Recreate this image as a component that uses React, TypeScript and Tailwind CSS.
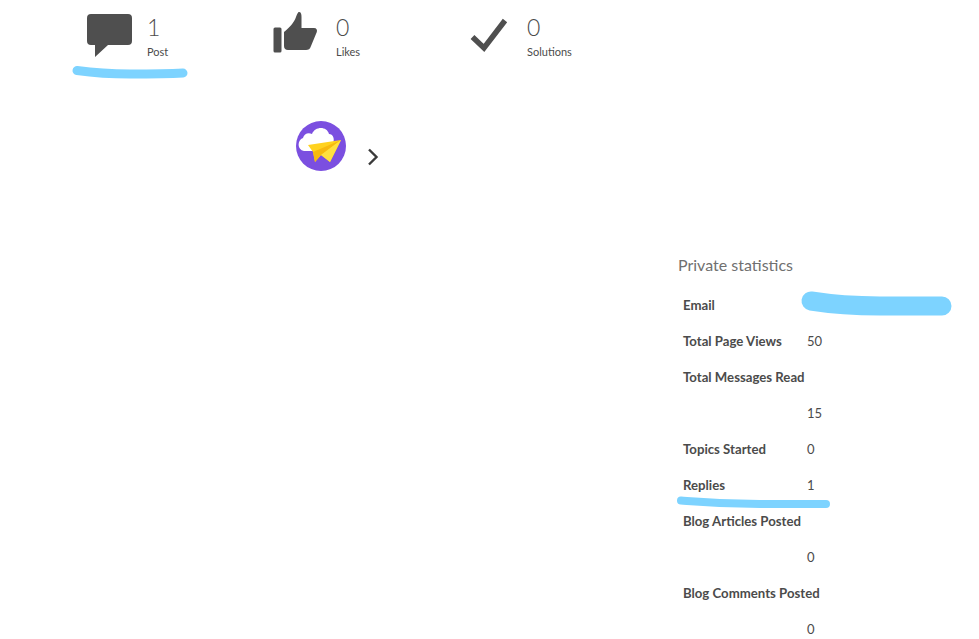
import React from "react";

function Stat({ width, iconWidth, icon, value, label }: { width: string; iconWidth: string; icon: React.ReactNode; value: string; label: string }) {
  return (
    <div className={`flex ${width}`}>
      <div className={iconWidth}>{icon}</div>
      <div className="flex flex-col text-[#4b4b4b]">
        <span className="text-[23px] leading-[30px] font-light">{value}</span>
        <span className="text-[11px] leading-[16px] mt-[2px]">{label}</span>
      </div>
    </div>
  );
}

const rows: [string, string][] = [
  ["Email", ""],
  ["Total Page Views", "50"],
  ["Total Messages Read", ""],
  ["", "15"],
  ["Topics Started", "0"],
  ["Replies", "1"],
  ["Blog Articles Posted", ""],
  ["", "0"],
  ["Blog Comments Posted", ""],
  ["", "0"],
];

export default function App() {
  return (
    <div className="relative w-[979px] h-[639px] overflow-hidden bg-white font-['Lato','Liberation_Sans',sans-serif]">
      <div className="flex pl-[87px] pt-[12px] h-[121px]">
        <Stat
          width="w-[186px]"
          iconWidth="w-[60px]"
          value="1"
          label="Post"
          icon={
            <svg width="46" height="46" viewBox="0 0 46 46" className="mt-[2px]">
              <path d="M4 0H41a4 4 0 0 1 4 4V27a4 4 0 0 1-4 4H21L8 43V31H4a4 4 0 0 1-4-4V4a4 4 0 0 1 4-4Z" fill="#4f4f4f" />
            </svg>
          }
        />
        <Stat
          width="w-[197px]"
          iconWidth="w-[63px]"
          value="0"
          label="Likes"
          icon={
            <svg width="45" height="44" viewBox="0 0 45 44" className="-mt-[1px]">
              <rect x="0.5" y="16.5" width="8" height="25" rx="1.5" fill="#4f4f4f" />
              <path d="M11 21C16 17 21 12 23 6C24 3 25 1 26 1C28 1 28.500 3 28.500 6V17H41C43.500 17 44.500 19 43.800 21L38 35C37 38 35.500 39 33 39H15C12.500 39 11 37.500 11 35Z" fill="#4f4f4f" />
            </svg>
          }
        />
        <Stat
          width="w-[200px]"
          iconWidth="w-[57px]"
          value="0"
          label="Solutions"
          icon={
            <svg width="38" height="40" viewBox="0 0 38 40" className="mt-[5px]">
              <path d="M2.500 20L14 31L35 3.500" fill="none" stroke="#4f4f4f" strokeWidth="5.500" />
            </svg>
          }
        />
      </div>

      <div className="flex items-start pl-[296px] h-[132px]">
        <svg width="50" height="50" viewBox="0 0 50 50">
          <circle cx="25" cy="25" r="25" fill="#7b4fe0" />
          <path d="M8 30C1 29 1 19 7 17C8 13 12 11 16 13C19 5 31 5 33 13C37 13 39 18 37 22L22 33L17 30Z" fill="#ffffff" />
          <path d="M12 24L45 19L34 41L25 34L19 41L17 31Z" fill="#ffd21f" />
          <path d="M45 19L17 31L19 41L25 34Z" fill="#f7b90f" />
          <path d="M45 19L25 34L34 41Z" fill="#ffe03f" />
        </svg>
        <svg width="12" height="18" viewBox="0 0 12 18" className="ml-[21px] mt-[27px]">
          <path d="M2 1.500L9.500 9L2 16.500" fill="none" stroke="#3a3a3a" strokeWidth="2.400" />
        </svg>
      </div>

      <div className="ml-[678px] w-[290px]">
        <h2 className="text-[16px] leading-[24px] text-[#707070] font-normal">Private statistics</h2>
        <div className="mt-[11px] pl-[5px] text-[13.2px] text-[#4b4b4b]">
          {rows.map(([label, value], i) => (
            <div key={i} className="flex items-center h-[36px]">
              <span className="w-[124px] shrink-0 font-bold whitespace-nowrap">{label}</span>
              <span className="text-[13px]">{value}</span>
            </div>
          ))}
        </div>
      </div>

      <svg width="979" height="639" viewBox="0 0 979 639" className="absolute left-0 top-0 pointer-events-none">
        <path d="M77 70.500C95 73 110 74 130 74C150 74 165 74 183 73" fill="none" stroke="#7dd3ff" strokeWidth="9" strokeLinecap="round" />
        <path d="M811 301C830 304 850 306 880 306H942" fill="none" stroke="#7dd3ff" strokeWidth="19" strokeLinecap="round" />
        <path d="M681 500.500C700 502 720 504 760 504H826" fill="none" stroke="#7dd3ff" strokeWidth="8" strokeLinecap="round" />
      </svg>
    </div>
  );
}
